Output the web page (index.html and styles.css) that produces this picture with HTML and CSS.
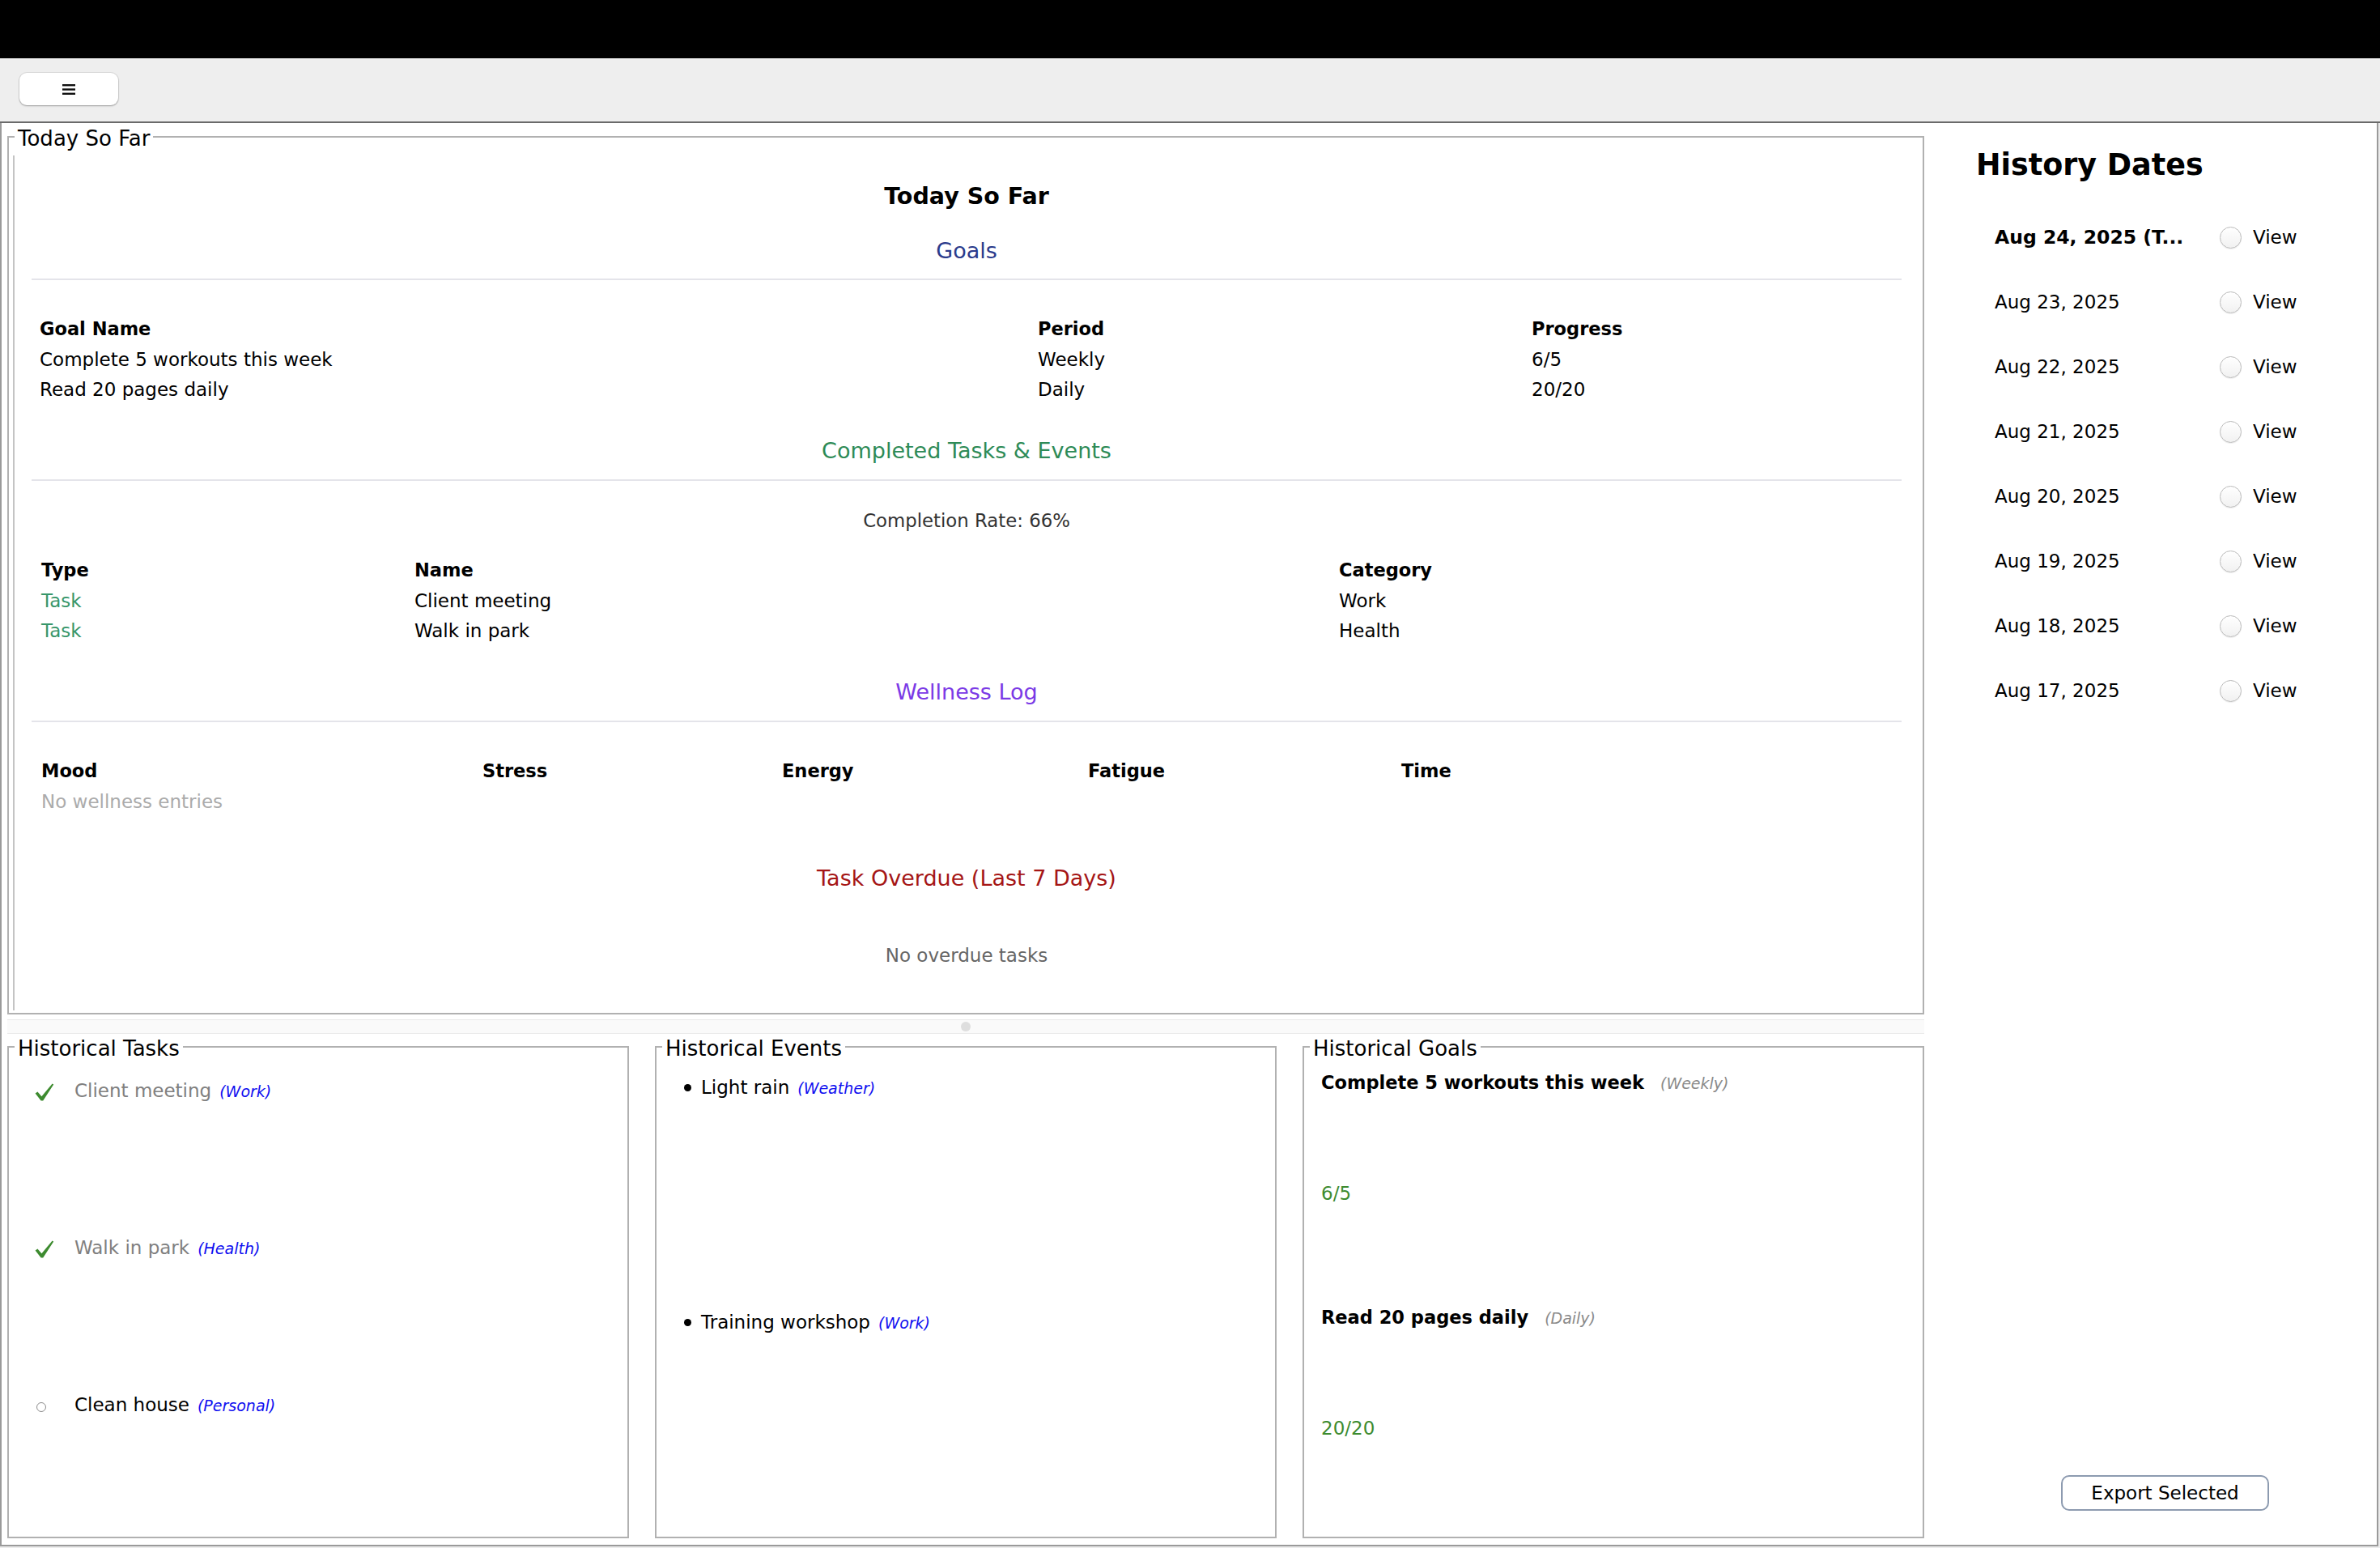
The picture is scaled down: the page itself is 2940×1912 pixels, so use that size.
FILE: index.html
```html
<!DOCTYPE html>
<html>
<head>
<meta charset="utf-8">
<title>History</title>
<link rel="stylesheet" href="styles.css">
</head>
<body>
<div class="titlebar"></div>
<div class="toolbar">
  <button class="menu-btn" type="button" aria-label="Menu">
    <svg width="16" height="13" viewBox="0 0 16 13"><rect x="0" y="0" width="16" height="2.4"/><rect x="0" y="5.3" width="16" height="2.4"/><rect x="0" y="10.6" width="16" height="2.4"/></svg>
  </button>
</div>
<div class="main">
  <div class="leftcol">
    <fieldset class="tbox today">
      <legend>Today So Far</legend>
      <div class="pane">
        <div class="h1">Today So Far</div>
        <div class="h2 c-goals">Goals</div>
        <div class="hr"></div>
        <div class="tbl tbl-goals">
          <div class="th">Goal Name</div><div class="th">Period</div><div class="th">Progress</div>
          <div>Complete 5 workouts this week</div><div>Weekly</div><div>6/5</div>
          <div>Read 20 pages daily</div><div>Daily</div><div>20/20</div>
        </div>
        <div class="h2 c-tasks sec2">Completed Tasks &amp; Events</div>
        <div class="hr hr2"></div>
        <div class="rate">Completion Rate: 66%</div>
        <div class="tbl tbl-tasks">
          <div class="th">Type</div><div class="th">Name</div><div class="th">Category</div>
          <div class="type">Task</div><div>Client meeting</div><div>Work</div>
          <div class="type">Task</div><div>Walk in park</div><div>Health</div>
        </div>
        <div class="h2 c-well sec2">Wellness Log</div>
        <div class="hr hr2"></div>
        <div class="tbl tbl-well">
          <div class="th">Mood</div><div class="th">Stress</div><div class="th">Energy</div><div class="th">Fatigue</div><div class="th">Time</div>
          <div class="muted">No wellness entries</div>
        </div>
        <div class="h2 c-over sec-over">Task Overdue (Last 7 Days)</div>
        <div class="empty">No overdue tasks</div>
      </div>
    </fieldset>
    <div class="divider"><span class="grip"></span></div>
    <div class="hist">
      <fieldset class="tbox">
        <legend>Historical Tasks</legend>
        <div class="list tasks">
          <div class="task-row">
            <span class="ico"><svg class="check" width="24" height="22" viewBox="0 0 24 22"><path d="M0.6 12.4 L3.4 10.6 L8.4 16.2 L21.6 0.6 L23.2 1.6 L10.2 21.4 L7.6 21.4 Z"/></svg></span>
            <span class="label"><span class="done">Client meeting</span><span class="cat">(Work)</span></span>
          </div>
          <div class="task-row">
            <span class="ico"><svg class="check" width="24" height="22" viewBox="0 0 24 22"><path d="M0.6 12.4 L3.4 10.6 L8.4 16.2 L21.6 0.6 L23.2 1.6 L10.2 21.4 L7.6 21.4 Z"/></svg></span>
            <span class="label"><span class="done">Walk in park</span><span class="cat">(Health)</span></span>
          </div>
          <div class="task-row">
            <span class="ico"><span class="open"></span></span>
            <span class="label"><span>Clean house</span><span class="cat">(Personal)</span></span>
          </div>
        </div>
      </fieldset>
      <fieldset class="tbox">
        <legend>Historical Events</legend>
        <div class="list events">
          <div class="event-row">
            <span class="bullet"></span>
            <span class="label"><span>Light rain</span><span class="cat">(Weather)</span></span>
          </div>
          <div class="event-row">
            <span class="bullet"></span>
            <span class="label"><span>Training workshop</span><span class="cat">(Work)</span></span>
          </div>
        </div>
      </fieldset>
      <fieldset class="tbox">
        <legend>Historical Goals</legend>
        <div class="list goals">
          <div class="goal-row">
            <div class="goal-name"><span>Complete 5 workouts this week</span><span class="period">(Weekly)</span></div>
            <div class="goal-prog">6/5</div>
          </div>
          <div class="goal-row">
            <div class="goal-name"><span>Read 20 pages daily</span><span class="period">(Daily)</span></div>
            <div class="goal-prog">20/20</div>
          </div>
        </div>
      </fieldset>
    </div>
  </div>
  <div class="rightcol">
    <div class="rtitle">History Dates</div>
    <div class="dates">
      <div class="date-row"><span class="date-label today-date">Aug 24, 2025 (T...</span><span class="radio"></span><span class="view">View</span></div>
      <div class="date-row"><span class="date-label">Aug 23, 2025</span><span class="radio"></span><span class="view">View</span></div>
      <div class="date-row"><span class="date-label">Aug 22, 2025</span><span class="radio"></span><span class="view">View</span></div>
      <div class="date-row"><span class="date-label">Aug 21, 2025</span><span class="radio"></span><span class="view">View</span></div>
      <div class="date-row"><span class="date-label">Aug 20, 2025</span><span class="radio"></span><span class="view">View</span></div>
      <div class="date-row"><span class="date-label">Aug 19, 2025</span><span class="radio"></span><span class="view">View</span></div>
      <div class="date-row"><span class="date-label">Aug 18, 2025</span><span class="radio"></span><span class="view">View</span></div>
      <div class="date-row"><span class="date-label">Aug 17, 2025</span><span class="radio"></span><span class="view">View</span></div>
    </div>
    <button class="export-btn" type="button">Export Selected</button>
  </div>
</div>
</body>
</html>
```
FILE: styles.css
```css
* { box-sizing: border-box; }
html, body { margin: 0; padding: 0; }
body {
  width: 2940px;
  height: 1912px;
  overflow: hidden;
  background: #ececec;
  font-family: "DejaVu Sans", "Liberation Sans", sans-serif;
  font-size: 23px;
  color: #000;
}

.titlebar { height: 72px; background: #000; }

.toolbar {
  height: 80px;
  background: #eeeeee;
  border-bottom: 2px solid #6a6a6a;
  padding: 18px 0 0 24px;
}
.menu-btn {
  width: 122px;
  height: 40px;
  padding: 0;
  border: none;
  border-radius: 9px;
  background: #fff;
  box-shadow: 0 0 0 1px rgba(0,0,0,0.07), 0 1px 2px rgba(0,0,0,0.3);
  display: flex;
  align-items: center;
  justify-content: center;
}
.menu-btn svg { display: block; fill: #111; }

.main {
  display: flex;
  width: 2938px;
  height: 1758px;
  background: #fff;
  border-left: 2px solid #9a9a9a;
  border-right: 2px solid #9a9a9a;
  border-bottom: 2px solid #9a9a9a;
}

.leftcol {
  width: 2381px;
  flex: none;
  display: flex;
  flex-direction: column;
  padding: 0 6px 8px 7px;
}

fieldset.tbox {
  margin: 0;
  padding: 0;
  min-width: 0;
  border: 2px solid #b1b1b1;
}
fieldset.tbox legend {
  margin-left: 7px;
  padding: 4px 4px 0 4px;
  height: 34px;
  font-size: 26px;
  line-height: 30px;
  color: #000;
}

.pane {
  margin: 6px 0 3px 5px;
  height: 1056px;
  border-left: 2px solid #c4c4c4;
  padding: 0 26px 0 21px;
  display: flex;
  flex-direction: column;
}

.h1 {
  margin-top: 31px;
  height: 40px;
  line-height: 40px;
  font-size: 28.5px;
  font-weight: bold;
  text-align: center;
}
.h2 {
  margin-top: 30px;
  height: 34px;
  line-height: 34px;
  font-size: 27px;
  text-align: center;
}
.h2.sec2 { margin-top: 39.25px; }
.h2.sec-over { margin-top: 58.75px; }
.c-goals { color: #2b3b8c; }
.c-tasks { color: #2e8b57; }
.c-well { color: #7b3ae6; }
.c-over { color: #a51616; }

.hr {
  margin-top: 17px;
  height: 2px;
  background: #e4e4ea;
}
.hr.hr2 { margin-top: 18px; }

.tbl {
  display: grid;
  grid-auto-rows: 37.5px;
  line-height: 37.5px;
  white-space: nowrap;
}
.tbl .th { font-weight: bold; font-size: 22.5px; }
.tbl-goals {
  margin-top: 42.25px;
  padding-left: 10px;
  grid-template-columns: 1233px 610px 1fr;
}
.tbl-tasks {
  margin-top: 28.25px;
  padding-left: 12px;
  grid-template-columns: 461px 1142px 1fr;
}
.tbl-well {
  margin-top: 42.25px;
  padding-left: 12px;
  grid-template-columns: 545px 370px 378px 387px 1fr;
}
.type { color: #38966a; }
.muted { color: #ababab; grid-column: 1 / span 2; }

.rate {
  margin-top: 34px;
  height: 30px;
  line-height: 30px;
  font-size: 22.8px;
  color: #333;
  text-align: center;
}
.empty {
  margin-top: 62.5px;
  height: 30px;
  line-height: 30px;
  font-size: 23px;
  color: #666;
  text-align: center;
}

.divider {
  margin-top: 6px;
  height: 18px;
  border-top: 1px solid #ebebeb;
  border-bottom: 1px solid #ebebeb;
  background: #fafafa;
  display: flex;
  align-items: center;
  justify-content: center;
}
.grip {
  width: 12px;
  height: 12px;
  border-radius: 50%;
  background: #dedede;
}

.hist {
  margin-top: -1px;
  display: grid;
  grid-template-columns: 768px 768px 768px;
  column-gap: 32px;
}

.list { height: 588px; }
.label { white-space: nowrap; }
.cat {
  margin-left: 10px;
  font-size: 19px;
  font-style: italic;
  color: #1010f0;
}

.tasks { padding-left: 32px; }
.task-row {
  height: 194px;
  padding-top: 22px;
  display: flex;
  align-items: flex-start;
  line-height: 30px;
}
.ico {
  width: 49px;
  flex: none;
  height: 30px;
  display: flex;
  align-items: center;
}
.check { display: block; fill: #3d8b2f; margin-top: 3px; }
.open {
  width: 12px;
  height: 12px;
  margin: 6px 0 0 2px;
  border: 1.5px solid #8c8c8c;
  border-radius: 50%;
}
.done { color: #808080; }

.events { padding-left: 34px; }
.event-row {
  height: 290px;
  padding-top: 18px;
  display: flex;
  align-items: flex-start;
  line-height: 30px;
}
.bullet {
  width: 9px;
  height: 9px;
  margin: 11px 12px 0 0;
  border-radius: 50%;
  background: #000;
  flex: none;
}

.goals { padding-left: 21px; }
.goal-row { height: 290px; padding-top: 12px; }
.goal-name {
  height: 30px;
  line-height: 30px;
  font-weight: bold;
  font-size: 22.5px;
  white-space: nowrap;
}
.period {
  margin-left: 20px;
  font-weight: normal;
  font-style: italic;
  font-size: 19px;
  color: #8a8a8a;
}
.goal-prog {
  margin-top: 107px;
  height: 30px;
  line-height: 30px;
  color: #3d8b2f;
}

.rightcol {
  flex: 1;
  min-width: 0;
  display: flex;
  flex-direction: column;
  padding: 29px 0 42px 58px;
}
.rtitle {
  height: 46px;
  line-height: 46px;
  font-size: 36.5px;
  font-weight: bold;
}
.dates { margin-top: 26px; padding-left: 23px; }
.date-row {
  height: 80px;
  display: flex;
  align-items: center;
}
.date-label {
  width: 278px;
  flex: none;
  white-space: nowrap;
  overflow: hidden;
}
.today-date { font-weight: bold; font-size: 23.5px; }
.radio {
  width: 27px;
  height: 27px;
  flex: none;
  margin-right: 14px;
  border-radius: 50%;
  border: 1px solid #bababa;
  background: linear-gradient(#ffffff, #f1f1f1);
  box-shadow: 0 1px 1px rgba(0,0,0,0.07);
}
.export-btn {
  margin-top: auto;
  margin-left: 105px;
  width: 257px;
  height: 44px;
  padding: 0;
  border: 2px solid #8d9bb0;
  border-radius: 10px;
  background: #fff;
  font-family: inherit;
  font-size: 23px;
  color: #000;
}
```
